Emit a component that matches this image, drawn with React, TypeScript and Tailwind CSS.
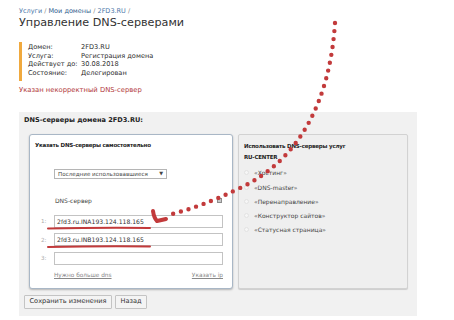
import React from 'react';

const font = { fontFamily: '"DejaVu Sans", Verdana, sans-serif' };

const info = [
  ['Домен:', '2FD3.RU'],
  ['Услуга:', 'Регистрация домена'],
  ['Действует до:', '30.08.2018'],
  ['Состояние:', 'Делегирован'],
];

const services = ['«Хостинг»', '«DNS-master»', '«Перенаправление»', '«Конструктор сайтов»', '«Статусная страница»'];

const dnsRows = ['2fd3.ru.INA193.124.118.165', '2fd3.ru.INB193.124.118.165', ''];

const App: React.FC = () => {
  return (
    <div className="relative w-[454px] h-[320px] overflow-hidden bg-white text-[#333]" style={font}>
      <div className="pl-[19px] pt-[7px]">
        {/* Breadcrumbs */}
        <div className="h-[8px] leading-[8px] text-[6.5px] text-[#8a8a8a]">
          <span className="text-[#4a76a8]">Услуги</span> / <span className="text-[#2f5d8e]">Мои домены</span> /{' '}
          <span className="text-[#4a76a8]">2FD3.RU</span> /
        </div>
        <h1 className="h-[15px] leading-[15px] text-[11.2px] text-[#333]">Управление DNS-серверами</h1>

        {/* Domain info */}
        <div className="mt-[12px] border-l-[3px] border-[#f0a93e] pl-[6px] pt-[1px] pb-[3px] text-[6.6px] leading-[8.7px] text-[#2e2e2e]">
          {info.map(([label, value]) => (
            <div key={label} className="flex">
              <span className="w-[53px]">{label}</span>
              <span>{value}</span>
            </div>
          ))}
        </div>
        <div className="mt-[5px] h-[8px] leading-[8px] text-[6.8px] text-[#b2383a]">Указан некорректный DNS-сервер</div>

        {/* DNS panel */}
        <div className="mt-[18px] w-[398px] bg-[#f1f1f1] pt-[4px] pb-[7px] px-[5px]">
          <div className="h-[8px] leading-[8px] text-[6.6px] font-bold text-[#222]">DNS-серверы домена 2FD3.RU:</div>
          <div className="mt-[10px] pl-[5px] flex gap-[5px]">
            <div className="w-[204px] h-[155px] bg-white border border-[#a9b7c6] rounded-[3px] shadow-[0_1px_2px_rgba(0,0,0,0.25)] pl-[5px]">
              <div className="pt-[6px] h-[14px] leading-[8px] text-[5.5px] tracking-[-0.2px] font-bold text-[#222]">
                Указать DNS-серверы самостоятельно
              </div>
              <div className="mt-[20px] ml-[19px] w-[113px] h-[10px] border border-[#b5b5b5] bg-white flex items-center justify-between px-[3px] text-[5.6px] text-[#444]">
                <span>Последние использовавшиеся</span>
                <span className="text-[5px]">▼</span>
              </div>
              <div className="mt-[18px] ml-[20px] w-[167px] h-[8px] flex items-center justify-between text-[6px] text-[#444]">
                <span>DNS-сервер</span>
                <span className="w-[5px] h-[5px] border border-[#8d8d8d] bg-[#c8c8c8]" />
              </div>
              <div className="mt-[10px] flex flex-col gap-[5.5px]">
                {dnsRows.map((v, i) => (
                  <div key={i} className="flex items-center">
                    <span className="w-[19px] pl-[6px] text-[5.6px] text-[#aaa]">{i + 1}:</span>
                    <div className="w-[169px] h-[13px] border border-[#c3c3c3] bg-white pl-[2px] flex items-center text-[6.1px] text-[#333]">
                      {v}
                    </div>
                  </div>
                ))}
              </div>
              <div className="mt-[6px] ml-[19px] w-[169px] h-[8px] leading-[8px] flex justify-between text-[5.8px] text-[#888] underline">
                <span>Нужно больше dns</span>
                <span>Указать ip</span>
              </div>
            </div>

            <div className="w-[170px] h-[155px] bg-[#efefef] border border-[#d2d2d2] rounded-[2px] shadow-[0_1px_1px_rgba(0,0,0,0.15)] pl-[5px]">
              <div className="pt-[6px] text-[5.5px] tracking-[-0.2px] leading-[11px] font-bold text-[#222]">
                Использовать DNS-серверы услуг
                <br />
                RU-CENTER
              </div>
              <div className="mt-[3px]">
                {services.map((s) => (
                  <div key={s} className="flex items-center h-[14.25px] text-[6px] text-[#444]">
                    <span className="w-[5px] h-[5px] rounded-full border border-[#e2e2e2] bg-[#f6f6f6] mr-[5px]" />
                    {s}
                  </div>
                ))}
              </div>
            </div>
          </div>

          <div className="mt-[6px] flex gap-[3px]">
            <button className="w-[88px] h-[14px] border border-[#c4c4c4] bg-[#f4f4f4] rounded-[1px] text-[6.6px] text-[#333]">
              Сохранить изменения
            </button>
            <button className="w-[32px] h-[14px] border border-[#c4c4c4] bg-[#f4f4f4] rounded-[1px] text-[6.6px] text-[#333]">
              Назад
            </button>
          </div>
        </div>
      </div>

      {/* Red annotation arrow and underlines */}
      <svg className="absolute inset-0 pointer-events-none" width="454" height="320" viewBox="0 0 454 320">
        <path
          d="M335 23 C330 100 300 160 240 188 C215 200 195 208 172 214"
          fill="none"
          stroke="#c23a3b"
          strokeWidth="4.4"
          strokeLinecap="round"
          strokeDasharray="0 8"
        />
        <path d="M153 211 Q154 218 157 221 L166 219" fill="none" stroke="#c23a3b" strokeWidth="4" strokeLinecap="round" strokeLinejoin="round" />
        <path d="M48 228.5 Q100 227.5 150 228" fill="none" stroke="#c23a3b" strokeWidth="2" strokeLinecap="round" />
        <path d="M48 247 Q100 246 150 246.5" fill="none" stroke="#c23a3b" strokeWidth="2" strokeLinecap="round" />
      </svg>
    </div>
  );
};

export default App;
